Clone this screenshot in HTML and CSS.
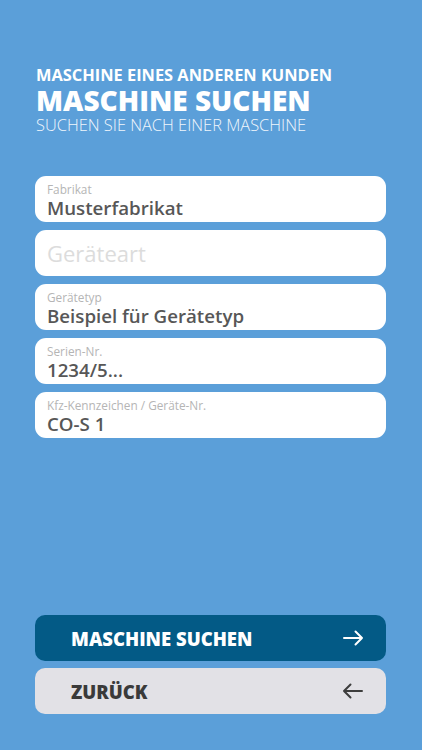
FILE: index.html
```html
<!DOCTYPE html>
<html lang="de">
<head>
<meta charset="utf-8">
<link rel="stylesheet" href="styles.css">
</head>
<body>
<div class="screen">
  <header class="head">
    <div class="kicker">MASCHINE EINES ANDEREN KUNDEN</div>
    <h1 class="title">MASCHINE SUCHEN</h1>
    <div class="sub">SUCHEN SIE NACH EINER MASCHINE</div>
  </header>
  <div class="fields">
    <div class="field"><div class="label">Fabrikat</div><div class="value">Musterfabrikat</div></div>
    <div class="field empty"><div class="placeholder">Geräteart</div></div>
    <div class="field"><div class="label">Gerätetyp</div><div class="value">Beispiel für Gerätetyp</div></div>
    <div class="field"><div class="label">Serien-Nr.</div><div class="value">1234/5...</div></div>
    <div class="field"><div class="label">Kfz-Kennzeichen / Geräte-Nr.</div><div class="value">CO-S 1</div></div>
  </div>
  <div class="spacer"></div>
  <div class="buttons">
    <div class="btn primary"><span>MASCHINE SUCHEN</span>
      <svg width="22" height="16" viewBox="0 0 22 16"><path d="M2 8H20M13.5 1.5L20 8L13.5 14.5" fill="none" stroke="#fff" stroke-width="2" stroke-linecap="round" stroke-linejoin="round"/></svg>
    </div>
    <div class="btn secondary"><span>ZURÜCK</span>
      <svg width="22" height="16" viewBox="0 0 22 16"><path d="M20 8H2M8.5 1.5L2 8L8.5 14.5" fill="none" stroke="#3d3d3d" stroke-width="2" stroke-linecap="round" stroke-linejoin="round"/></svg>
    </div>
  </div>
</div>
</body>
</html>
```
FILE: styles.css
```css
html, body { margin: 0; padding: 0; }
body {
  background: #5b9fd9;
  font-family: "Open Sans", "Noto Sans", sans-serif;
}
.screen {
  width: 422px;
  height: 750px;
  box-sizing: border-box;
  padding: 64px 36px 36px 35px;
  display: flex;
  flex-direction: column;
}
.head { padding-left: 1px; color: #fff; }
.kicker { font-size: 16.4px; font-weight: 700; line-height: 22px; }
.title { margin: 0; font-size: 28px; font-weight: 800; line-height: 28px; }
.sub { font-size: 16.4px; font-weight: 300; line-height: 22px; color: #f0f6fc; }
.fields {
  margin-top: 40px;
  display: flex;
  flex-direction: column;
  gap: 8px;
}
.field {
  background: #fff;
  border-radius: 11px;
  height: 46px;
  box-sizing: border-box;
  padding: 6px 12px 0;
  display: flex;
  flex-direction: column;
}
.label { font-size: 11.8px; line-height: 15px; color: #b5b5b5; }
.value { font-size: 18.7px; font-weight: 600; line-height: 22px; color: #575757; }
.field.empty { justify-content: center; padding-top: 0; }
.placeholder { font-size: 22px; color: #dcdcdc; line-height: 26px; }
.spacer { flex: 1; }
.buttons { display: flex; flex-direction: column; gap: 7px; }
.btn {
  height: 46px;
  border-radius: 10px;
  box-sizing: border-box;
  padding: 0 22px 0 36px;
  display: flex;
  align-items: center;
  justify-content: space-between;
  font-size: 18.5px;
  font-weight: 800;
}
.btn.primary { background: #035a86; color: #fff; }
.btn.secondary { background: #e2e1e6; color: #3a3a3a; }
```
